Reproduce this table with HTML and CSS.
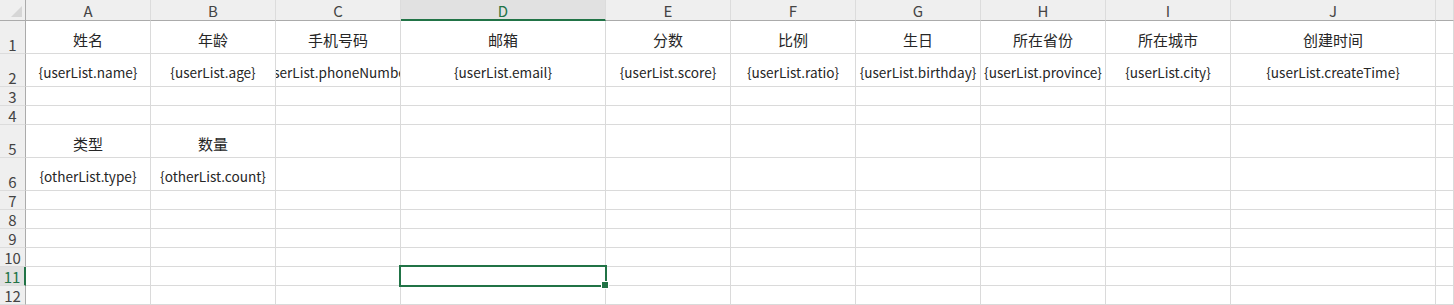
FILE: index.html
```html
<!DOCTYPE html>
<html lang="zh-CN">
<head>
<meta charset="utf-8">
<title>Sheet</title>
<link rel="stylesheet" href="styles.css">
</head>
<body>
<div class="sheet">
  <div class="corner"><span class="tri"></span></div>
  <div class="ch">A</div><div class="ch">B</div><div class="ch">C</div><div class="ch sel">D</div><div class="ch">E</div><div class="ch">F</div><div class="ch">G</div><div class="ch">H</div><div class="ch">I</div><div class="ch">J</div><div class="ch"></div>

  <div class="rh">1</div>
  <div class="c">姓名</div><div class="c">年龄</div><div class="c">手机号码</div><div class="c">邮箱</div><div class="c">分数</div><div class="c">比例</div><div class="c">生日</div><div class="c">所在省份</div><div class="c">所在城市</div><div class="c">创建时间</div><div class="c"></div>

  <div class="rh">2</div>
  <div class="c lat">{userList.name}</div><div class="c lat">{userList.age}</div><div class="c lat">{userList.phoneNumber}</div><div class="c lat">{userList.email}</div><div class="c lat">{userList.score}</div><div class="c lat">{userList.ratio}</div><div class="c lat">{userList.birthday}</div><div class="c lat">{userList.province}</div><div class="c lat">{userList.city}</div><div class="c lat">{userList.createTime}</div><div class="c"></div>

  <div class="rh">3</div>
  <div class="c"></div><div class="c"></div><div class="c"></div><div class="c"></div><div class="c"></div><div class="c"></div><div class="c"></div><div class="c"></div><div class="c"></div><div class="c"></div><div class="c"></div>

  <div class="rh">4</div>
  <div class="c"></div><div class="c"></div><div class="c"></div><div class="c"></div><div class="c"></div><div class="c"></div><div class="c"></div><div class="c"></div><div class="c"></div><div class="c"></div><div class="c"></div>

  <div class="rh">5</div>
  <div class="c">类型</div><div class="c">数量</div><div class="c"></div><div class="c"></div><div class="c"></div><div class="c"></div><div class="c"></div><div class="c"></div><div class="c"></div><div class="c"></div><div class="c"></div>

  <div class="rh">6</div>
  <div class="c lat">{otherList.type}</div><div class="c lat">{otherList.count}</div><div class="c"></div><div class="c"></div><div class="c"></div><div class="c"></div><div class="c"></div><div class="c"></div><div class="c"></div><div class="c"></div><div class="c"></div>

  <div class="rh">7</div>
  <div class="c"></div><div class="c"></div><div class="c"></div><div class="c"></div><div class="c"></div><div class="c"></div><div class="c"></div><div class="c"></div><div class="c"></div><div class="c"></div><div class="c"></div>

  <div class="rh">8</div>
  <div class="c"></div><div class="c"></div><div class="c"></div><div class="c"></div><div class="c"></div><div class="c"></div><div class="c"></div><div class="c"></div><div class="c"></div><div class="c"></div><div class="c"></div>

  <div class="rh">9</div>
  <div class="c"></div><div class="c"></div><div class="c"></div><div class="c"></div><div class="c"></div><div class="c"></div><div class="c"></div><div class="c"></div><div class="c"></div><div class="c"></div><div class="c"></div>

  <div class="rh">10</div>
  <div class="c"></div><div class="c"></div><div class="c"></div><div class="c"></div><div class="c"></div><div class="c"></div><div class="c"></div><div class="c"></div><div class="c"></div><div class="c"></div><div class="c"></div>

  <div class="rh sel">11</div>
  <div class="c"></div><div class="c"></div><div class="c"></div><div class="c active"><span class="selbox"></span><span class="handle"></span></div><div class="c"></div><div class="c"></div><div class="c"></div><div class="c"></div><div class="c"></div><div class="c"></div><div class="c"></div>

  <div class="rh">12</div>
  <div class="c"></div><div class="c"></div><div class="c"></div><div class="c"></div><div class="c"></div><div class="c"></div><div class="c"></div><div class="c"></div><div class="c"></div><div class="c"></div><div class="c"></div>
</div>
</body>
</html>
```

FILE: styles.css
```css
html, body {
  margin: 0;
  padding: 0;
  background: #ffffff;
}
body {
  width: 1454px;
  height: 305px;
  overflow: hidden;
  font-family: "Noto Sans CJK SC", "Noto Sans", sans-serif;
  color: #333333;
}
.sheet {
  display: grid;
  grid-template-columns: 26px 125px 125px 125px 205px 125px 125px 125px 125px 125px 205px 18px;
  grid-template-rows: 21px 33px 33px 19px 19px 33px 33px 19px 19px 19px 19px 19px 19px;
  width: 1454px;
  height: 305px;
}
.corner, .ch {
  box-sizing: border-box;
  background: #efefef;
  border-bottom: 1px solid #ababab;
}
.corner {
  position: relative;
  border-right: 1px solid #ababab;
}
.tri {
  position: absolute;
  left: 11px;
  top: 6px;
  width: 0;
  height: 0;
  border-left: 11px solid transparent;
  border-bottom: 11px solid #d6d6d6;
}
.ch {
  display: flex;
  align-items: center;
  justify-content: center;
  border-right: 1px solid #dcdcdc;
  font-size: 15px;
  color: #444444;
  line-height: 1;
  padding-top: 1px;
}
.ch.sel {
  background: #e1e1e1;
  border-bottom: 2px solid #217346;
  color: #217346;
  padding-top: 2px;
}
.rh {
  box-sizing: border-box;
  background: #efefef;
  border-right: 1px solid #ababab;
  border-bottom: 1px solid #dcdcdc;
  display: flex;
  align-items: flex-end;
  justify-content: center;
  font-size: 15px;
  line-height: 1;
  color: #444444;
  padding-bottom: 1px;
}
.rh.sel {
  background: #e1e1e1;
  border-right: 2px solid #217346;
  color: #217346;
}
.c {
  box-sizing: border-box;
  border-right: 1px solid #dadada;
  border-bottom: 1px solid #dadada;
  display: flex;
  align-items: center;
  justify-content: center;
  overflow: hidden;
  white-space: nowrap;
  font-size: 15px;
  line-height: 1;
  color: #262626;
  padding-top: 5px;
}
.c.lat { font-size: 13.6px; }
.active {
  position: relative;
  overflow: visible;
}
.selbox {
  position: absolute;
  left: -2px;
  top: -2px;
  width: 208px;
  height: 22px;
  box-sizing: border-box;
  border: 2px solid #217346;
}
.handle {
  position: absolute;
  left: 200px;
  top: 14px;
  width: 6px;
  height: 6px;
  background: #217346;
  border: 1px solid #ffffff;
}
```
